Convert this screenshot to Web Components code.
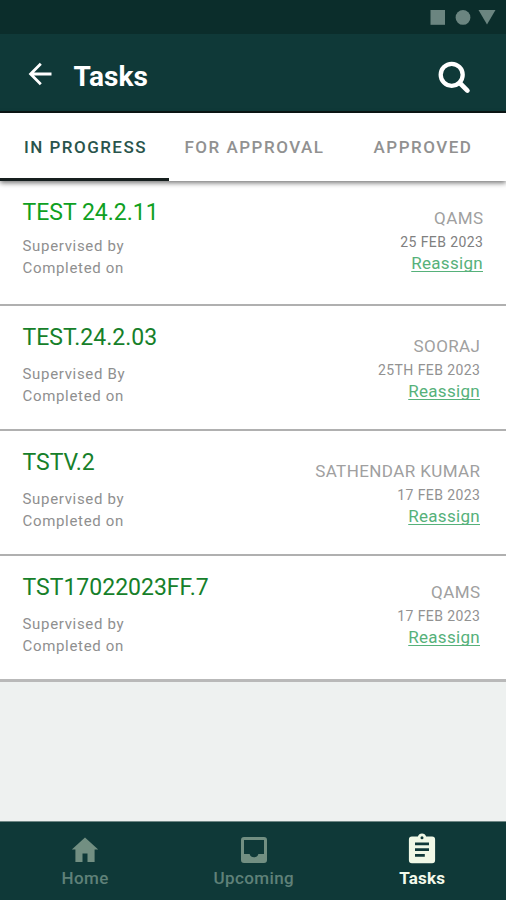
<!DOCTYPE html>
<html lang="en">
<head>
<meta charset="utf-8">
<title>Tasks</title>
<style>
html,body{margin:0;height:100%;overflow:hidden;background:#eef1f0;font-family:Roboto,"Liberation Sans",sans-serif}
</style>
</head>
<body>
<tasks-app></tasks-app>
<script>
const define = (name, html, setup) => customElements.define(name, class extends HTMLElement {
  connectedCallback() {
    if (this.shadowRoot) return;
    const t = document.createElement('template');
    t.innerHTML = html;
    this.attachShadow({mode: 'open'}).append(t.content.cloneNode(true));
    if (setup) setup(this);
  }
});

define('status-bar', `
<style>
:host{display:flex;height:34px;background:#0b2d2b;justify-content:flex-end}
svg{display:block;width:80px;height:34px;fill:#6b8580}
</style>
<svg viewBox="0 0 80 34"><rect x="4.5" y="10" width="14.5" height="14.8"/><circle cx="37" cy="17.4" r="7.4"/><path d="M52.5 10h17L61 24.4z"/></svg>`);

define('app-header', `
<style>
:host{display:flex;height:79px;box-sizing:border-box;background:#0f3938;border-bottom:2px solid #0c1716;align-items:center;padding:0 36px 0 24px;color:#fff}
svg{display:block;fill:none;stroke:#fff}
.back{width:32px;height:32px;margin-top:3px}
.find{width:40px;height:40px;margin:10px -4px 0 0}
h1{flex:1;margin:8px 0 0 17.5px;font-size:28px;line-height:34px;font-weight:700;letter-spacing:.1px}
</style>
<svg class="back" viewBox="0 0 32 32" stroke-width="2.8"><path d="M27.5 16H6.500M16.800 5.800L6.600 16l10.200 10.200"/></svg>
<h1><slot></slot></h1>
<svg class="find" viewBox="0 0 40 40"><circle cx="17.7" cy="16.8" r="11" stroke-width="4.3"/><path d="M25.800 25l7.600 7.600" stroke-width="4.7" stroke-linecap="round"/></svg>`);

define('tab-item', `
<style>
:host{display:flex;align-items:center;justify-content:center;box-sizing:border-box;height:68px;padding:2px 0 0 2px;font-size:17px;font-weight:500;letter-spacing:1.5px;color:#919191;white-space:nowrap;border-bottom:3px solid transparent}
:host([active]){color:#29544c;border-bottom-color:#161f1e;letter-spacing:1.45px}
</style><slot></slot>`);

define('tab-strip', `
<style>
:host{display:grid;grid-template-columns:169px 169px 168px;background:#fff;position:relative;height:68px;box-shadow:0 2px 5px rgba(0,0,0,.55)}
</style><slot></slot>`);

define('task-row', `
<style>
:host{display:flex;justify-content:space-between;box-sizing:border-box;height:125px;background:#fff;border-bottom:2px solid #b0b0b0;padding:var(--top,18px) var(--right,26px) 0 22.5px}
.title{font-size:23px;line-height:28px;color:var(--title,#16802a);margin-bottom:var(--gap,10.7px)}
.sub{font-size:15px;line-height:22.5px;letter-spacing:.68px;color:#8f8f8f}
.right{text-align:right;padding-top:var(--drop,10px);white-space:nowrap}
.name{font-size:17px;line-height:24px;letter-spacing:.4px;color:#a0a0a0;margin-right:-.4px}
.date{font-size:14px;line-height:22px;padding-top:1px;margin-bottom:-1px;letter-spacing:.42px;color:var(--date,#929292);margin-right:-.4px}
.act{font-size:17px;line-height:23px;letter-spacing:.3px;color:#56b17a;text-decoration:underline;text-decoration-thickness:1px;text-underline-offset:2px;text-decoration-skip-ink:none}
</style>
<div><div class="title"></div><div class="sub sup"></div><div class="sub">Completed on</div></div>
<div class="right"><div class="name"></div><div class="date"></div><div class="act">Reassign</div></div>`,
el => {
  const q = s => el.shadowRoot.querySelector(s);
  q('.title').textContent = el.getAttribute('heading');
  q('.sup').textContent = el.getAttribute('supervised') || 'Supervised by';
  q('.name').textContent = el.getAttribute('person');
  q('.date').textContent = el.getAttribute('date');
});

define('nav-item', `
<style>
:host{display:flex;flex-direction:column;align-items:center;color:#5f8179;font-size:17px;font-weight:500;letter-spacing:.4px;line-height:22px;padding:11px 0 0 1.5px}
:host([active]){color:#f3faeb;font-weight:700;letter-spacing:.2px;padding-left:1px}
::slotted(svg){display:block;width:34px;height:34px;fill:#728f82}
:host([active]) ::slotted(svg){fill:#f0f8e6}
</style><slot name="icon"></slot><slot></slot>`);

define('bottom-nav', `
<style>
:host{display:grid;grid-template-columns:repeat(3,1fr);box-sizing:border-box;height:78px;background:#0f3938;box-shadow:0 -1px 0 #6f8785}
</style><slot></slot>`);

define('tasks-app', `
<style>
:host{display:flex;flex-direction:column;height:900px;width:506px}
main{flex:1;background:#eef1f0}
.first{height:125px;--top:18px;--gap:7.700px;--drop:7px;--right:23px;--title:#0fa022;--date:#808080}
.last{height:126px;border-bottom:3px solid #b9b9b9;--drop:6px}
</style>
<status-bar></status-bar>
<app-header>Tasks</app-header>
<tab-strip><tab-item active>IN PROGRESS</tab-item><tab-item>FOR APPROVAL</tab-item><tab-item>APPROVED</tab-item></tab-strip>
<main>
<task-row class="first" heading="TEST 24.2.11" person="QAMS" date="25 FEB 2023"></task-row>
<task-row heading="TEST.24.2.03" supervised="Supervised By" person="SOORAJ" date="25TH FEB 2023"></task-row>
<task-row heading="TSTV.2" person="SATHENDAR KUMAR" date="17 FEB 2023"></task-row>
<task-row class="last" heading="TST17022023FF.7" person="QAMS" date="17 FEB 2023"></task-row>
</main>
<bottom-nav>
<nav-item><svg slot="icon" viewBox="0 0 34 34"><path d="M17 4.400L3.800 16.400h3.600V29h7.100v-8.600h5V29h7.100V16.400h3.600z"/></svg>Home</nav-item>
<nav-item><svg slot="icon" viewBox="0 0 34 34"><path fill-rule="evenodd" d="M7 4h20a3 3 0 0 1 3 3v20a3 3 0 0 1-3 3H7a3 3 0 0 1-3-3V7a3 3 0 0 1 3-3zM7 7v14h5.600a4.600 4.600 0 0 0 8.800 0H27V7z"/></svg>Upcoming</nav-item>
<nav-item active><svg slot="icon" viewBox="0 0 34 34"><path fill-rule="evenodd" d="M6.900 3.400h6a4.300 4.300 0 0 1 8.200 0h6a3 3 0 0 1 3 3v20.800a3 3 0 0 1-3 3H6.900a3 3 0 0 1-3-3V6.400a3 3 0 0 1 3-3zM17 3.200a1.500 1.500 0 1 0 0 3 1.500 1.500 0 0 0 0-3zM10 9.400v2.800h14V9.400zM10 15.300v2.800h14v-2.800zM10 21v2.800h9.800V21z"/></svg>Tasks</nav-item>
</bottom-nav>`);
</script>
</body>
</html>
